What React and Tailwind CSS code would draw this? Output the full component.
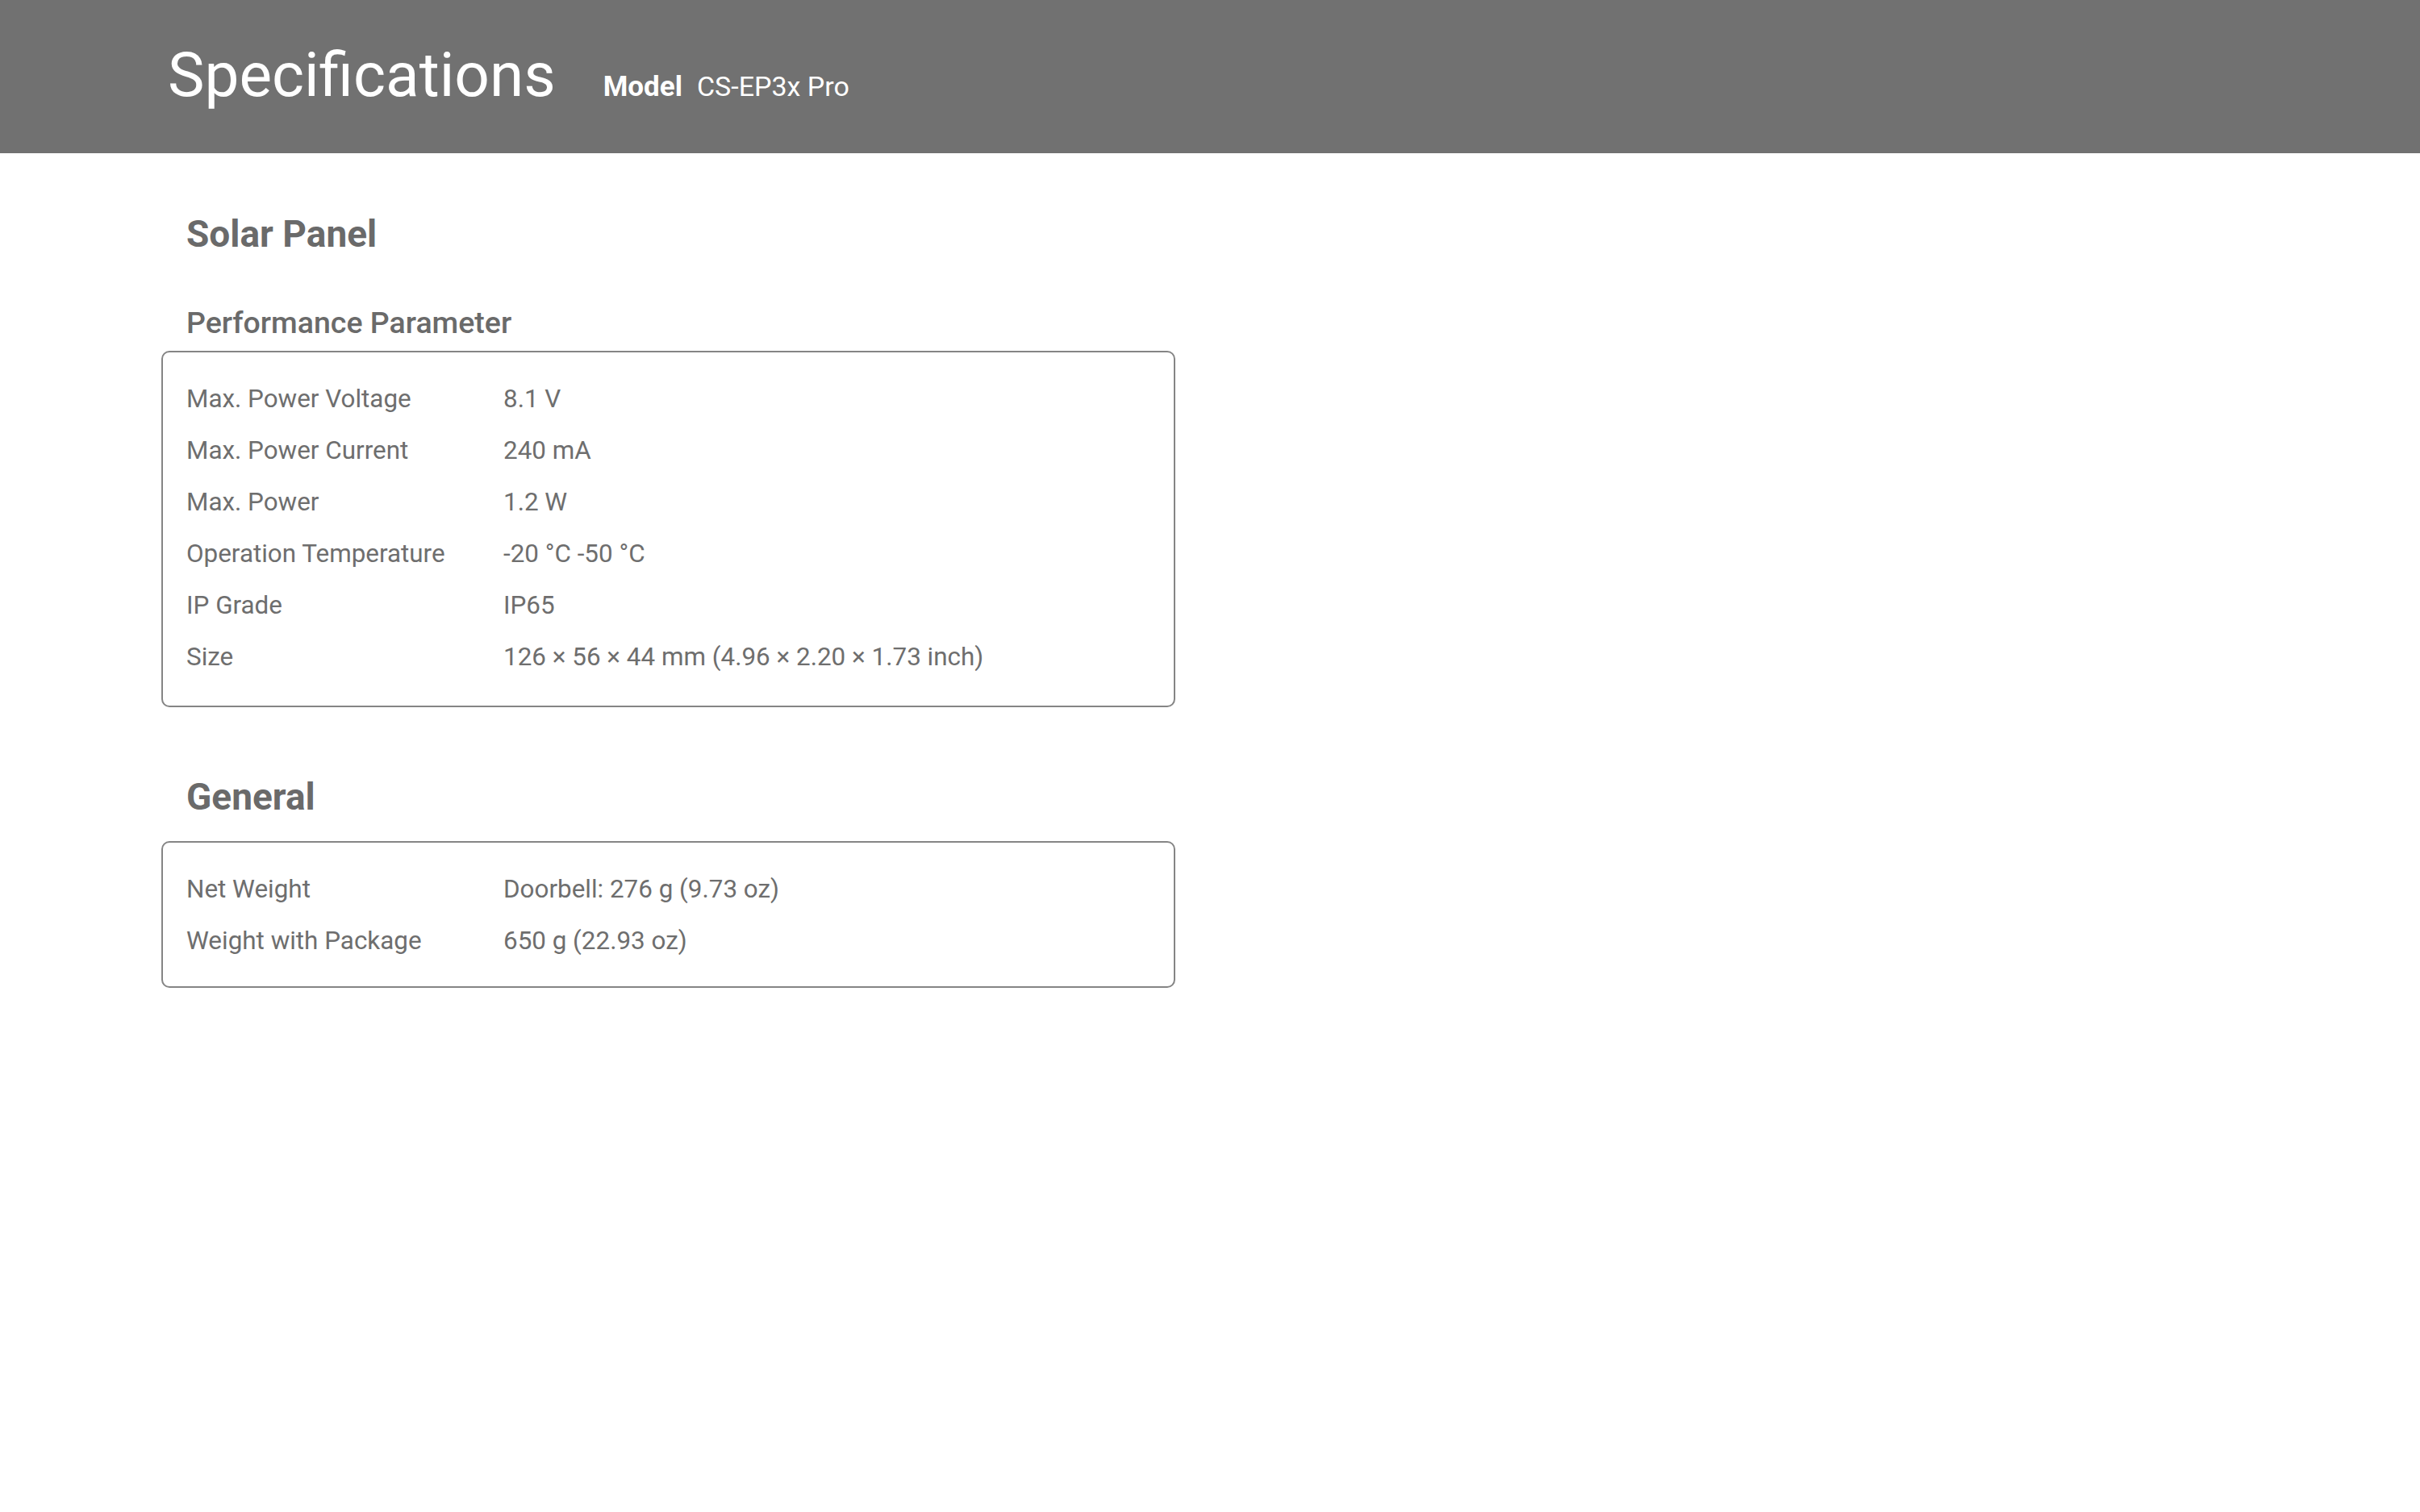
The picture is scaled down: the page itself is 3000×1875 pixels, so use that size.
import React from "react";

const solar = [
  ["Max. Power Voltage", "8.1 V"],
  ["Max. Power Current", "240 mA"],
  ["Max. Power", "1.2 W"],
  ["Operation Temperature", "-20 °C -50 °C"],
  ["IP Grade", "IP65"],
  ["Size", "126 × 56 × 44 mm (4.96 × 2.20 × 1.73 inch)"],
];

const general = [
  ["Net Weight", "Doorbell: 276 g (9.73 oz)"],
  ["Weight with Package", "650 g (22.93 oz)"],
];

function SpecBox({ rows, className = "" }) {
  return (
    <div
      className={`w-[1257px] border-2 border-[#858585] rounded-[10px] pl-[29px] pt-[26px] ${className}`}
    >
      {rows.map(([label, value]) => (
        <div key={label} className="flex text-[31.4px] leading-[64px] text-[#6e6e6e]">
          <div className="w-[393px] shrink-0">{label}</div>
          <div>{value}</div>
        </div>
      ))}
    </div>
  );
}

export default function App() {
  return (
    <div
      className="min-h-screen bg-white"
      style={{ fontFamily: "Roboto, 'Liberation Sans', sans-serif" }}
    >
      {/* Header */}
      <header className="h-[190px] bg-[#717171] text-white flex items-center pl-[208px]">
        <div className="flex items-baseline -mt-[4px]">
          <h1 className="text-[76.5px] font-normal leading-none">
            Specifications
          </h1>
          <span className="ml-[59px] text-[35px] font-bold leading-none">Model</span>
          <span className="ml-[18px] text-[34px] font-normal leading-none">CS-EP3x Pro</span>
        </div>
      </header>

      {/* Content */}
      <main className="pl-[200px] pt-[73px]">
        <h2 className="pl-[31px] text-[46px] font-bold leading-[54px] text-[#6a6a6a]">
          Solar Panel
        </h2>
        <h3 className="pl-[31px] mt-[62px] text-[37.5px] font-medium leading-[43px] text-[#6a6a6a]">
          Performance Parameter
        </h3>
        <SpecBox rows={solar} className="mt-[13px] pb-[28px]" />

        <h2 className="pl-[31px] mt-[84px] text-[46px] font-bold leading-[54px] text-[#6a6a6a]">
          General
        </h2>
        <SpecBox rows={general} className="mt-[28px] pb-[24px]" />
      </main>
    </div>
  );
}
